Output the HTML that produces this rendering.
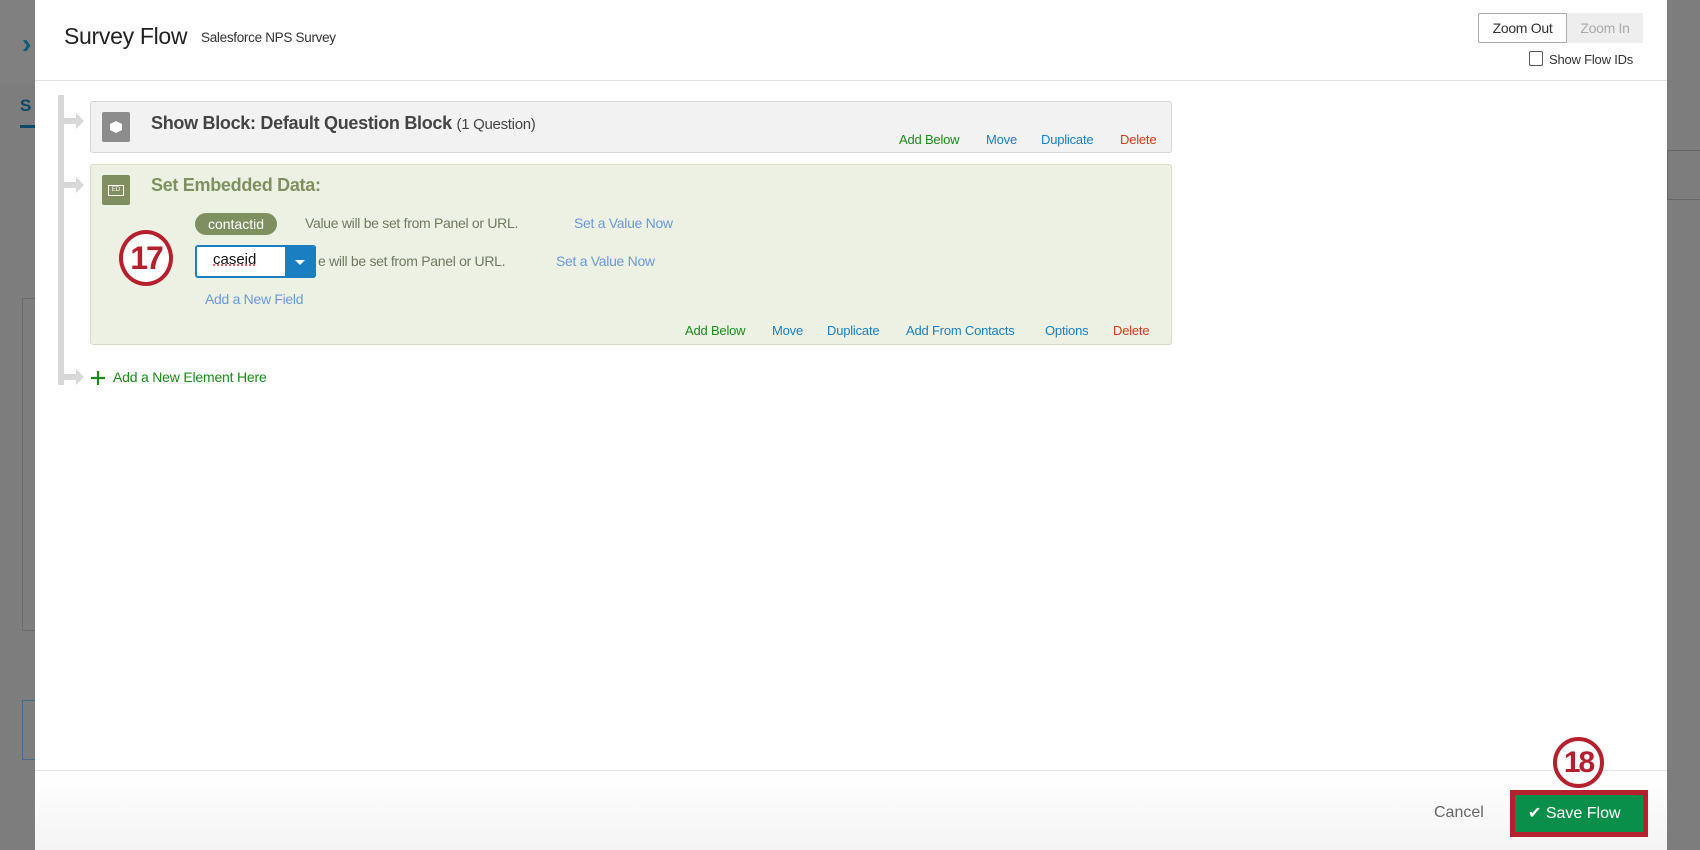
<!DOCTYPE html>
<html><head><meta charset="utf-8"><style>
*{margin:0;padding:0;box-sizing:border-box}
body{width:1700px;height:850px;overflow:hidden;background:#7d7d7d;font-family:"Liberation Sans",sans-serif;position:relative}
.a{position:absolute;white-space:nowrap}
#modal{position:absolute;left:35px;top:0;width:1632px;height:850px;background:#fff}
.lnk{font-size:13px;letter-spacing:-0.2px}
.g{color:#1a8a1a}.b{color:#1a7fc1}.r{color:#d13a1a}.lb{color:#6a9ad8}
</style></head><body>
<div class="a" style="left:0;top:0;width:35px;height:85px;background:#808080"></div>
<div class="a" style="left:22px;top:28px;color:#0b5b7a;font-size:28px;font-weight:bold">›</div>
<div class="a" style="left:20px;top:96px;color:#0b4a6a;font-size:17px;font-weight:bold">S</div>
<div class="a" style="left:20px;top:125px;width:15px;height:3px;background:#0b4a6a"></div>
<div class="a" style="left:22px;top:298px;width:13px;height:333px;border:1px solid #6a6a6a;border-right:none"></div>
<div class="a" style="left:22px;top:700px;width:13px;height:60px;border:1px solid #4a6a8a;border-right:none"></div>
<div class="a" style="left:1667px;top:150px;width:33px;height:50px;border:1px solid #666;border-right:none"></div>
<div id="modal">
<div class="a" style="left:29px;top:23px;font-size:23px;color:#222;letter-spacing:-0.3px">Survey Flow</div>
<div class="a" style="left:166px;top:30px;font-size:13.5px;color:#333;letter-spacing:-0.3px">Salesforce NPS Survey</div>
<div class="a" style="left:1443px;top:13px;width:89px;height:30px;border:1px solid #aaa;border-radius:2px 0 0 2px;font-size:14px;color:#333;text-align:center;line-height:28px;letter-spacing:-0.3px">Zoom Out</div>
<div class="a" style="left:1532px;top:13px;width:76px;height:30px;background:#eee;font-size:14px;color:#aaa;text-align:center;line-height:30px;letter-spacing:-0.3px">Zoom In</div>
<div class="a" style="left:1494px;top:51px;width:14px;height:15px;border:1px solid #555;border-radius:2px"></div>
<div class="a" style="left:1514px;top:52px;font-size:13px;color:#333;letter-spacing:-0.2px">Show Flow IDs</div>
<div class="a" style="left:0;top:80px;width:1632px;height:1px;background:#e2e2e2"></div>
<div class="a" style="left:23px;top:95px;width:6px;height:290px;background:#d8d8d8"></div>
<div class="a" style="left:29px;top:118px;width:12px;height:6px;background:#d8d8d8"></div>
<div class="a" style="left:41px;top:113px;border-left:8px solid #d8d8d8;border-top:8px solid transparent;border-bottom:8px solid transparent"></div>
<div class="a" style="left:29px;top:182px;width:12px;height:6px;background:#d8d8d8"></div>
<div class="a" style="left:41px;top:177px;border-left:8px solid #d8d8d8;border-top:8px solid transparent;border-bottom:8px solid transparent"></div>
<div class="a" style="left:29px;top:374px;width:12px;height:6px;background:#d8d8d8"></div>
<div class="a" style="left:41px;top:369px;border-left:8px solid #d8d8d8;border-top:8px solid transparent;border-bottom:8px solid transparent"></div>
<div class="a" style="left:55px;top:101px;width:1082px;height:52px;background:#f2f2f2;border:1px solid #d6d6d6;border-radius:3px"></div>
<div class="a" style="left:67px;top:112px;width:28px;height:30px;background:#8c8c8c;border-radius:2px"><svg width="28" height="30" viewBox="0 0 28 30"><path d="M14 9l6 3v6l-6 3-6-3v-6z" fill="#fff"/></svg></div>
<div class="a" style="left:116px;top:113px;font-size:18px;font-weight:bold;color:#444;letter-spacing:-0.3px">Show Block: Default Question Block <span style="font-weight:normal;font-size:15px">(1 Question)</span></div>
<div class="a lnk g" style="left:864px;top:132px">Add Below</div>
<div class="a lnk b" style="left:951px;top:132px">Move</div>
<div class="a lnk b" style="left:1006px;top:132px">Duplicate</div>
<div class="a lnk r" style="left:1085px;top:132px">Delete</div>
<div class="a" style="left:55px;top:164px;width:1082px;height:181px;background:#edf1e3;border:1px solid #d6dcc6;border-radius:3px"></div>
<div class="a" style="left:67px;top:175px;width:28px;height:30px;background:#7f9060;border-radius:2px"><div style="margin:10px 6px;width:16px;height:11px;border:1px solid #fff;font-size:6px;color:#fff;text-align:center;line-height:9px">ED</div></div>
<div class="a" style="left:116px;top:175px;font-size:18px;font-weight:bold;color:#7f9060;letter-spacing:-0.3px">Set Embedded Data:</div>
<div class="a" style="left:160px;top:213px;width:82px;height:22px;background:#7f9060;border-radius:11px;color:#fff;font-size:14px;text-align:center;line-height:22px">contactid</div>
<div class="a" style="left:270px;top:215px;font-size:14px;color:#6f7a5f;letter-spacing:-0.3px">Value will be set from Panel or URL.</div>
<div class="a" style="left:539px;top:215px;font-size:14px;letter-spacing:-0.3px"><span class="lb">Set a Value Now</span></div>
<div class="a" style="left:283px;top:253px;font-size:14px;color:#6f7a5f;letter-spacing:-0.3px">e will be set from Panel or URL.</div>
<div class="a" style="left:521px;top:253px;font-size:14px;letter-spacing:-0.3px"><span class="lb">Set a Value Now</span></div>
<div class="a" style="left:160px;top:245px;width:121px;height:33px;border:2px solid #1a7fc1;border-radius:3px;background:#fff"></div>
<div class="a" style="left:178px;top:251px;font-size:15px;color:#111;text-decoration:underline dotted #d33">caseid</div>
<div class="a" style="left:250px;top:245px;width:31px;height:33px;background:#1a7fc1;border-radius:0 3px 3px 0"></div>
<div class="a" style="left:260px;top:260px;border-top:5px solid #fff;border-left:5px solid transparent;border-right:5px solid transparent"></div>
<div class="a" style="left:170px;top:291px;font-size:14px;letter-spacing:-0.3px"><span class="lb">Add a New Field</span></div>
<div class="a lnk g" style="left:650px;top:323px">Add Below</div>
<div class="a lnk b" style="left:737px;top:323px">Move</div>
<div class="a lnk b" style="left:792px;top:323px">Duplicate</div>
<div class="a lnk b" style="left:871px;top:323px">Add From Contacts</div>
<div class="a lnk b" style="left:1010px;top:323px">Options</div>
<div class="a lnk r" style="left:1078px;top:323px">Delete</div>
<svg class="a" style="left:55px;top:370px" width="16" height="16"><path d="M8 1v14M1 8h14" stroke="#1a8a1a" stroke-width="2.2"/></svg>
<div class="a" style="left:78px;top:369px;font-size:14px;color:#1a8a1a;letter-spacing:-0.2px">Add a New Element Here</div>
<div class="a" style="left:84px;top:230px;width:54px;height:56px;border:4px solid #b5202e;border-radius:50%;background:#fff;color:#b5202e;font-size:32px;font-weight:bold;text-align:center;line-height:48px;letter-spacing:-2px">17</div>
<div class="a" style="left:0;top:770px;width:1632px;height:1px;background:#e6e6e6"></div>
<div class="a" style="left:0;top:771px;width:1632px;height:79px;background:linear-gradient(#fff,#f4f4f4)"></div>
<div class="a" style="left:1399px;top:804px;font-size:16px;color:#666">Cancel</div>
<div class="a" style="left:1475px;top:790px;width:138px;height:47px;background:#b5202e;padding:5px"><div style="width:100%;height:100%;background:#0a8f4a;color:#fff;font-size:16px;line-height:37px;padding-left:13px">✔ Save Flow</div></div>
<div class="a" style="left:1518px;top:737px;width:51px;height:51px;border:4px solid #b5202e;border-radius:50%;background:#fff;color:#b5202e;font-size:30px;font-weight:bold;text-align:center;line-height:43px;letter-spacing:-2px">18</div>
</div>
</body></html>
